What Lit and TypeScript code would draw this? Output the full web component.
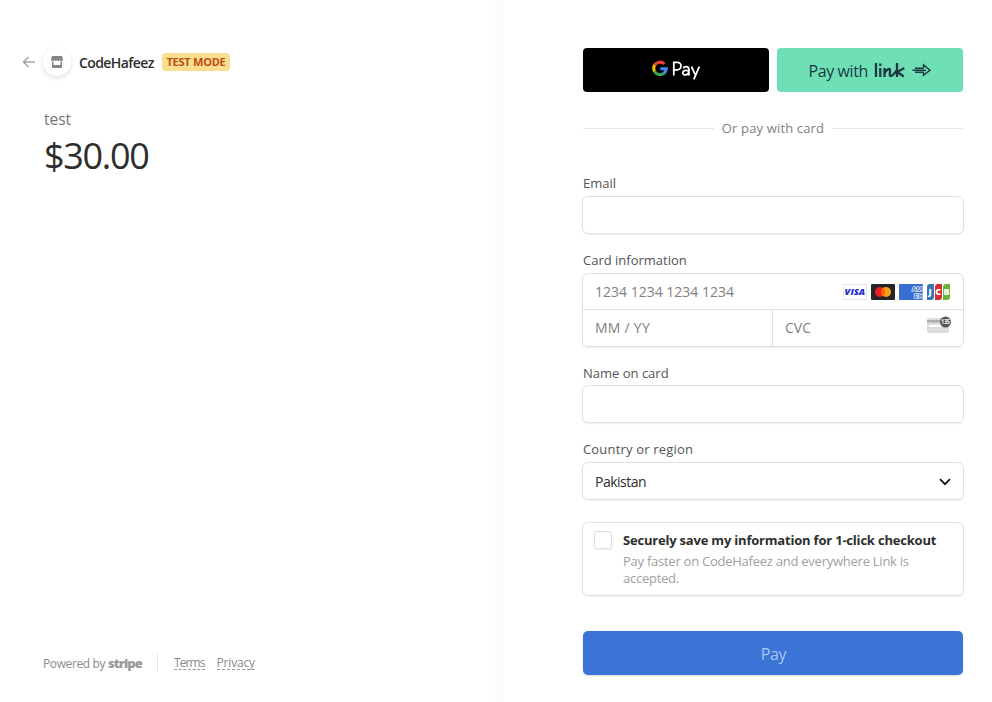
import { LitElement, html, css } from "lit";
import { customElement } from "lit/decorators.js";

@customElement("card-brands")
class CardBrands extends LitElement {
  static styles = css`
    :host { display: flex; gap: 4px; }
    svg { display: block; width: 24px; height: 16px; }
    text { font-family: "Open Sans", "Noto Sans", sans-serif; font-weight: 800; }
    .visa { font-size: 8.6px; font-style: italic; fill: #1a2bc8; }
    .amex { font-size: 5.6px; font-weight: 700; fill: #376fd0; stroke: #fff; stroke-width: 1.1px; paint-order: stroke; }
    .jcb { font-size: 9px; fill: #fff; }
  `;
  render() {
    return html`
      <svg viewBox="0 0 24 16">
        <rect x="0.5" y="0.5" width="23" height="15" rx="1" fill="#fff" stroke="#e2e4e8" />
        <text class="visa" transform="translate(1.600 11.200) scale(1.090 1)">VISA</text>
      </svg>
      <svg viewBox="0 0 24 16">
        <rect width="24" height="16" rx="1.2" fill="#252525" />
        <circle cx="9" cy="8" r="5" fill="#eb1c26" />
        <circle cx="15" cy="8" r="5" fill="#f79e1b" />
        <path d="M12 4a5 5 0 0 1 0 8a5 5 0 0 1 0-8z" fill="#ff5f00" />
      </svg>
      <svg viewBox="0 0 24 16">
        <rect width="24" height="16" rx="1" fill="#376fd0" />
        <text class="amex" transform="translate(13 7.400) scale(1.150 0.950)">AM</text>
        <text class="amex" transform="translate(15 13.600) scale(1.250 0.950)">EX</text>
      </svg>
      <svg viewBox="0 0 24 16">
        <path d="M0 3a3 3 0 0 1 3-3h4v13a3 3 0 0 1-3 3H0z" fill="#3877b5" />
        <path d="M8 3a3 3 0 0 1 3-3h4v13a3 3 0 0 1-3 3H8z" fill="#d42d34" />
        <path d="M16 3a3 3 0 0 1 3-3h4v13a3 3 0 0 1-3 3h-4z" fill="#66b435" />
        <text class="jcb" x="1.6 8.3 16.4" y="11.2">JCB</text>
      </svg>
    `;
  }
}

@customElement("app-root")
class AppRoot extends LitElement {
  static styles = css`
    * { box-sizing: border-box; }
    :host {
      display: grid;
      grid-template-columns: 503px 1fr;
      width: 992px;
      height: 702px;
      overflow: hidden;
      background: #fff;
      color: #2e2e2e;
      font-family: "Open Sans", "Noto Sans", sans-serif;
      font-size: 13px;
      white-space: nowrap;
    }
    svg { display: block; flex: none; }
    .summary {
      display: flex;
      flex-direction: column;
      padding: 48px 0 29px 22px;
      background: linear-gradient(to left, #fbfbfb, #fff 18px);
    }
    .brand { display: flex; align-items: center; height: 28px; }
    .shop {
      display: flex;
      align-items: center;
      justify-content: center;
      width: 28px;
      height: 28px;
      margin: 0 8px 0 7px;
      border-radius: 50%;
      background: #fff;
      box-shadow: 0 2px 5px rgba(0, 0, 0, 0.12), 0 0 1px rgba(0, 0, 0, 0.04);
    }
    .name { font-size: 14px; font-weight: 600; letter-spacing: -0.6px; width: 83px; }
    .badge {
      width: 68px;
      height: 18px;
      border-radius: 4px;
      background: #f8de8e;
      color: #bb4d10;
      font-size: 11px;
      font-weight: 700;
      line-height: 18px;
      letter-spacing: -0.25px;
      text-align: center;
    }
    .product { margin: 31px 0 0 22px; font-size: 15.5px; line-height: 24px; color: #757575; font-weight: 500; }
    .amount { margin: 3px 0 0 22px; font-size: 36px; line-height: 44px; letter-spacing: -1.3px; font-weight: 500; }
    .footer { display: flex; align-items: center; height: 20px; margin: auto 0 0 21px; font-size: 12px; color: #8a8a8a; }
    .powered { letter-spacing: -0.38px; width: 65px; }
    .stripe { font-size: 13px; font-weight: 800; letter-spacing: -0.95px; width: 49px; color: #999; }
    .bar { width: 1px; height: 18px; margin-right: 16px; background: #e4e4e4; }
    .link { margin-right: 12px; line-height: 13px; border-bottom: 1px dashed #999; letter-spacing: -0.2px; }
    .terms { letter-spacing: -0.9px; }

    .payment { padding: 48px 28px 0 79px; }
    .form { display: flex; flex-direction: column; width: 382px; }
    .wallets { display: flex; gap: 8px; padding: 0 1px; }
    .wallet { display: flex; align-items: center; justify-content: center; width: 186px; height: 44px; padding-left: 1px; border-radius: 4px; }
    .gpay { background: #000; }
    .linkpay { background: #6fe0b5; color: #1d3944; font-size: 16px; }
    .with { letter-spacing: -0.4px; width: 65px; padding-top: 2px; font-weight: 500; }
    .divider { display: flex; align-items: center; gap: 8px; height: 20px; margin: 26px 1px 0; color: #808080; letter-spacing: 0.15px; }
    .divider::before, .divider::after { content: ""; flex: 1; height: 1px; background: #e6e6e6; }
    .label { height: 18px; line-height: 18px; padding-left: 1px; color: #545454; }
    .l1 { margin-top: 36px; }
    .l2 { margin-top: 17px; }
    .country { letter-spacing: 0.18px; }
    .field {
      display: flex;
      align-items: center;
      height: 38px;
      margin-top: 4px;
      padding: 0 12px;
      border: 1px solid #e0e0e0;
      border-radius: 6px;
      box-shadow: 0 1px 2px rgba(0, 0, 0, 0.07);
    }
    .holder { margin-top: 3px; }
    .card { display: block; height: 74px; padding: 0; font-size: 14px; color: #808080; }
    .row { display: flex; align-items: center; justify-content: space-between; height: 36px; padding: 0 12px; }
    .number { border-bottom: 1px solid #e0e0e0; }
    .split { display: grid; grid-template-columns: 189px 1fr; }
    .cell { display: flex; align-items: center; justify-content: space-between; height: 36px; padding: 0 12px 1px; }
    .cell + .cell { border-left: 1px solid #e0e0e0; }
    .expiry { letter-spacing: 0.25px; }
    .cvc { margin-bottom: 5px; }
    .select { justify-content: space-between; font-size: 14px; letter-spacing: -0.5px; }
    .chevron { margin-top: 1px; }
    .save {
      display: flex;
      height: 74px;
      margin-top: 22px;
      padding: 8px 11px;
      border: 1px solid #e0e0e0;
      border-radius: 6px;
      box-shadow: 0 1px 2px rgba(0, 0, 0, 0.07);
    }
    .check { flex: none; width: 18px; height: 18px; margin-right: 11px; border: 1px solid #dedede; border-radius: 3px; box-shadow: 0 1px 2px rgba(0, 0, 0, 0.08); }
    .title { line-height: 18px; font-weight: 700; letter-spacing: -0.2px; }
    .note { margin-top: 4px; line-height: 17px; color: #a0a0a0; letter-spacing: -0.25px; }
    .pay {
      display: flex;
      align-items: center;
      justify-content: center;
      height: 44px;
      margin: 35px 1px 0;
      padding: 2px 0 0 1px;
      border-radius: 5px;
      background: #3b73d6;
      color: #a6c6ef;
      font-size: 16px;
      letter-spacing: -0.3px;
      font-weight: 500;
      box-shadow: 0 1px 2px rgba(0, 0, 0, 0.16);
    }
  `;
  render() {
    return html`
      <section class="summary">
        <div class="brand">
          <svg width="14" height="12" viewBox="0 0 14 12" fill="none" stroke="#a8a8a8" stroke-width="1.6">
            <path d="M13 6H2M6.5 1L1.5 6l5 5" />
          </svg>
          <div class="shop">
            <svg width="12" height="12" viewBox="0 0 12 12" fill="#858585">
              <path d="M1 0h10l1 3.200c0 1-.7 1.800-1.600 1.800S8.800 4.500 8.500 4.200C8.200 4.700 7.400 5 7.200 5 6.600 5 6.200 4.700 6 4.300 5.800 4.700 5.300 5 4.800 5 4.200 5 3.700 4.700 3.500 4.200 3.200 4.700 2.500 5 1.600 5 .7 5 0 4.200 0 3.200z" />
              <path d="M1 5.500h1.500V9h7V5.500H11V11a1 1 0 0 1-1 1H2a1 1 0 0 1-1-1z" />
            </svg>
          </div>
          <span class="name">CodeHafeez</span>
          <span class="badge">TEST MODE</span>
        </div>
        <div class="product">test</div>
        <div class="amount">$30.00</div>
        <div class="footer">
          <span class="powered">Powered by</span>
          <span class="stripe">stripe</span>
          <span class="bar"></span>
          <span class="link terms">Terms</span>
          <span class="link">Privacy</span>
        </div>
      </section>
      <section class="payment">
        <div class="form">
          <div class="wallets">
            <div class="wallet gpay">
              <svg width="50" height="22" viewBox="0 0 50 22">
                <g fill="none" stroke-width="3.1">
                  <path d="M12.400 5A6.300 6.300 0 0 0 2.500 6.200" stroke="#ea4335" />
                  <path d="M2.600 6A6.500 6.500 0 0 0 2.600 12.400" stroke="#fbbc04" />
                  <path d="M2.400 12.200A6.500 6.500 0 0 0 12.300 14" stroke="#34a853" />
                  <path d="M12 14.200A6.300 6.300 0 0 0 14.300 9.700H8.300" stroke="#4285f4" />
                </g>
                <g fill="none" stroke="#fff" stroke-width="1.8">
                  <path d="M21.800 16.400V3.400h3.500a3.700 3.700 0 0 1 0 7.400h-3.500" />
                  <path d="M31.200 9.300c.6-1.200 1.600-1.700 2.900-1.700 1.700 0 2.800 1 2.800 2.700v6.100M36.900 12c-3-1.200-6.100-.5-6.100 1.800 0 3 5.200 2.700 6.100-.5" />
                  <path d="M39.500 7.700l3.700 8M47.300 7.700l-5.500 12.700" />
                </g>
              </svg>
            </div>
            <div class="wallet linkpay">
              <span class="with">Pay with</span>
              <svg width="59" height="20" viewBox="0 0 59 20" fill="none" stroke="#1d3944" stroke-width="2.300">
                <path d="M2 3v14M6.300 8v9M10.500 17V8M10.700 13c1.200-3 4.800-5.500 5.300-3 .4 2.200-1.300 6 .8 6 2 0 3.700-3 5.700-5.500M23 3v14M30.300 8l-7 4 6.500 4.500" />
                <path d="M6.300 3.500v2.500" />
                <path stroke-width="1.400" d="M49.500 8.200V4.800L56 10.200l-6.500 5.200v-3.200H41M49.500 8.200H41M38.500 10.200H52" />
              </svg>
            </div>
          </div>
          <div class="divider">Or pay with card</div>
          <div class="label l1">Email</div>
          <div class="field"></div>
          <div class="label l2">Card information</div>
          <div class="field card">
            <div class="row number"><span>1234 1234 1234 1234</span><card-brands></card-brands></div>
            <div class="split">
              <div class="cell expiry"><span>MM / YY</span></div>
              <div class="cell">
                <span>CVC</span>
                <svg class="cvc" width="24" height="20" viewBox="0 0 24 20">
                  <rect y="3" width="22" height="15" rx="1.500" fill="#dcdcdc" />
                  <rect y="5" width="17" height="2.500" fill="#adadad" />
                  <rect x="2" y="10" width="17" height="2" fill="#fff" />
                  <circle cx="18.500" cy="7" r="5.500" fill="#565656" />
                  <text x="14.300" y="9.300" font-size="6.500" font-weight="700" fill="#fff" textLength="8.500" lengthAdjust="spacingAndGlyphs">135</text>
                </svg>
              </div>
            </div>
          </div>
          <div class="label l2">Name on card</div>
          <div class="field holder"></div>
          <div class="label l2 country">Country or region</div>
          <div class="field select">
            <span>Pakistan</span>
            <svg class="chevron" width="12" height="8" viewBox="0 0 12 8" fill="none" stroke="#111" stroke-width="1.800"><path d="M1 1.200l5 5 5-5" /></svg>
          </div>
          <div class="save">
            <span class="check"></span>
            <div>
              <div class="title">Securely save my information for 1-click checkout</div>
              <div class="note">Pay faster on CodeHafeez and everywhere Link is<br />accepted.</div>
            </div>
          </div>
          <div class="pay">Pay</div>
        </div>
      </section>
    `;
  }
}
